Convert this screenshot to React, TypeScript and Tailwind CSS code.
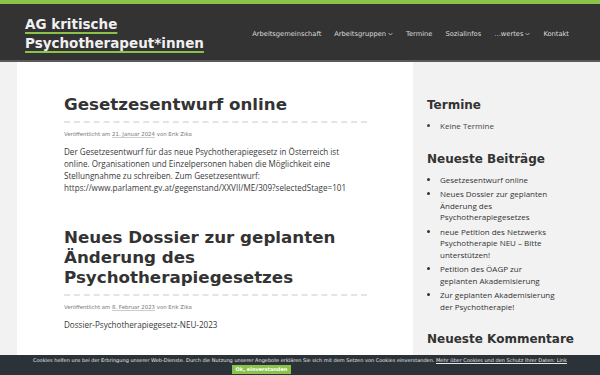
import React from "react";

const dv = { fontFamily: '"DejaVu Sans", Verdana, sans-serif' };
const os = { fontFamily: '"Open Sans", "Noto Sans", sans-serif' };

function Chevron() {
  return (
    <svg width="5" height="4" viewBox="0 0 5 4" className="ml-[2px] inline-block">
      <path d="M0.5 1 L2.5 3 L4.5 1" fill="none" stroke="#ccc" strokeWidth="0.8" />
    </svg>
  );
}

function Meta({ date }: { date: string }) {
  return (
    <div className="mt-[7px] text-[5.4px] leading-[8px] text-[#777]" style={dv}>
      Veröffentlicht am <span className="underline decoration-[#ccc]">{date}</span> von Erik Zika
    </div>
  );
}

function Dashed() {
  return <div className="mt-[6px] w-[303px] border-t-[2px] border-dashed border-[#e4e4e4]" />;
}

export default function App() {
  const nav = [
    { t: "Arbeitsgemeinschaft" },
    { t: "Arbeitsgruppen", c: true },
    { t: "Termine" },
    { t: "Sozialinfos" },
    { t: "…wertes", c: true },
    { t: "Kontakt" },
  ];
  const posts: string[][] = [
    ["Gesetzesentwurf online"],
    ["Neues Dossier zur geplanten", "Änderung des", "Psychotherapiegesetzes"],
    ["neue Petition des Netzwerks", "Psychotherapie NEU – Bitte", "unterstützen!"],
    ["Petition des ÖAGP zur", "geplanten Akademisierung"],
    ["Zur geplanten Akademisierung", "der Psychotherapie!"],
  ];
  return (
    <div className="min-h-screen bg-[#f2f2f2] relative">
      <div className="h-[4px] bg-[#8bc34a]" />
      <header className="h-[58px] bg-[#333] border-b-[2px] border-[#5a5a5a] flex items-start justify-between pl-[25px] pr-[31px]">
        <div className="pt-[11px] text-[13.5px] leading-[19px] font-bold text-[#f0f0f0]" style={dv}>
          <div>
            <span className="underline decoration-[#8bc34a] decoration-[2px] underline-offset-[3px]">AG kritische</span>
          </div>
          <div>
            <span className="underline decoration-[#8bc34a] decoration-[2px] underline-offset-[3px]">Psychotherapeut*innen</span>
          </div>
        </div>
        <nav className="flex items-center gap-[13px] pt-[25px] text-[6.7px] text-[#dcdcdc]" style={dv}>
          {nav.map((n) => (
            <span key={n.t} className="flex items-center whitespace-nowrap">
              {n.t}
              {n.c && <Chevron />}
            </span>
          ))}
        </nav>
      </header>
      <div className="flex pl-[17px]">
        <main className="w-[396px] bg-white pl-[47px] pr-[30px] pt-[31px] pb-[40px]">
          <article>
            <h1 className="text-[16.7px] leading-[22px] font-bold text-[#333]" style={dv}>
              Gesetzesentwurf online
            </h1>
            <Dashed />
            <Meta date="21. Januar 2024" />
            <p className="mt-[8px] text-[8.1px] leading-[12px] text-[#3a3a3a] w-[292px]" style={os}>
              Der Gesetzesentwurf für das neue Psychotherapiegesetz in Österreich ist online. Organisationen und Einzelpersonen haben die Möglichkeit eine Stellungnahme zu schreiben. Zum Gesetzesentwurf: https://www.parlament.gv.at/gegenstand/XXVII/ME/309?selectedStage=101
            </p>
          </article>
          <article className="mt-[33px]">
            <h1 className="text-[16.7px] leading-[20px] font-bold text-[#333] w-[290px]" style={dv}>
              Neues Dossier zur geplanten Änderung des Psychotherapiegesetzes
            </h1>
            <div className="mt-[7px] w-[303px] border-t-[2px] border-dashed border-[#e4e4e4]" />
            <Meta date="8. Februar 2023" />
            <p className="mt-[8px] text-[8.1px] leading-[12px] text-[#3a3a3a]" style={os}>
              Dossier-Psychotherapiegesetz-NEU-2023
            </p>
          </article>
        </main>
        <aside className="flex-1 pl-[14px] pr-[10px] pt-[36px]">
          <h2 className="text-[12px] leading-[14px] font-bold text-[#333]" style={dv}>Termine</h2>
          <ul className="mt-[8px] pl-[13px] list-disc text-[8px] leading-[11.5px] text-[#444]" style={os}>
            <li>Keine Termine</li>
          </ul>
          <h2 className="mt-[20px] text-[12px] leading-[14px] font-bold text-[#333]" style={dv}>Neueste Beiträge</h2>
          <ul className="mt-[8px] pl-[13px] list-disc text-[8px] leading-[11.5px] text-[#333]" style={os}>
            {posts.map((p) => (
              <li key={p[0]} className="mb-[3px] whitespace-nowrap">
                {p.map((l, i) => (
                  <React.Fragment key={l}>
                    {i > 0 && <br />}
                    {l}
                  </React.Fragment>
                ))}
              </li>
            ))}
          </ul>
          <h2 className="mt-[20px] text-[12px] leading-[14px] font-bold text-[#333]" style={dv}>Neueste Kommentare</h2>
        </aside>
      </div>
      <div className="fixed bottom-0 left-0 right-0 h-[20px] bg-[#2b3238] flex flex-col items-center pt-[2px]">
        <div className="text-[5px] leading-[7px] text-[#e6e6e6] whitespace-nowrap" style={dv}>
          Cookies helfen uns bei der Erbringung unserer Web-Dienste. Durch die Nutzung unserer Angebote erklären Sie sich mit dem Setzen von Cookies einverstanden.{" "}
          <span className="underline">Mehr über Cookies und den Schutz Ihrer Daten: Link</span>
        </div>
        <div className="mt-[1px] mr-[77px] h-[9px] px-[4px] bg-[#8bc34a] text-white text-[5px] leading-[9px] font-bold" style={dv}>
          Ok, einverstanden
        </div>
      </div>
    </div>
  );
}
